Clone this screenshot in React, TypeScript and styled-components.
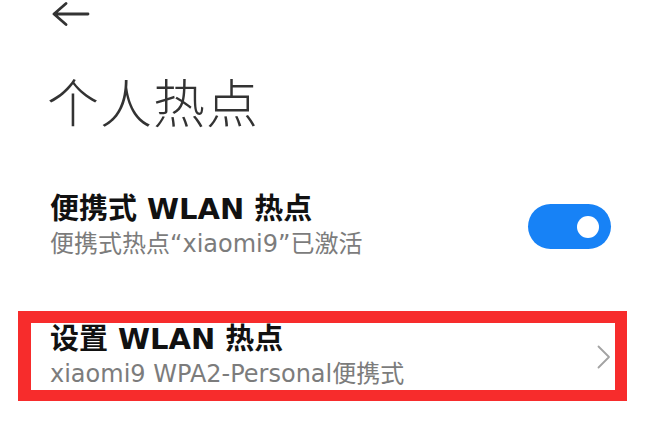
import { FC } from 'react';
import styled, { createGlobalStyle } from 'styled-components';

const GlobalStyle = createGlobalStyle`
  html, body {
    margin: 0;
    padding: 0;
    background: #ffffff;
  }
  body {
    font-family: "DejaVu Sans", "Noto Sans CJK SC", sans-serif;
    -webkit-font-smoothing: antialiased;
  }
`;

const Screen = styled.div`
  width: 660px;
  height: 425px;
  overflow: hidden;
  background: #fff;
  display: flex;
  flex-direction: column;
`;

const TopBar = styled.div`
  height: 26px;
  display: flex;
  align-items: flex-start;
  padding: 2px 0 0 52px;
`;

const BackButton = styled.button`
  border: 0;
  padding: 0;
  background: none;
  width: 38px;
  height: 24px;
  display: flex;
  color: #333;
`;

const PageTitle = styled.h1`
  margin: 45px 0 0 47px;
  font-family: "Noto Sans CJK SC", sans-serif;
  font-size: 52px;
  line-height: 56px;
  font-weight: 300;
  color: #333;
  letter-spacing: 1px;
`;

const List = styled.div`
  margin-top: 64px;
  display: flex;
  flex-direction: column;
`;

const Row = styled.div<{ $highlight?: boolean }>`
  display: flex;
  align-items: center;
  justify-content: space-between;
  margin: ${({ $highlight }) => ($highlight ? '51px 33px 0 18px' : '0 49px 0 50px')};
  padding: ${({ $highlight }) => ($highlight ? '0 4px 0 19px' : '0')};
  border: ${({ $highlight }) => ($highlight ? '12px solid #f72c2c' : 'none')};
  border-width: ${({ $highlight }) => ($highlight ? '12px 12px 11px 13px' : '0')};
`;

const RowText = styled.div`
  display: flex;
  flex-direction: column;
  gap: 4px;
`;

const RowTitle = styled.div`
  font-size: 29px;
  line-height: 32px;
  font-weight: 700;
  color: #111;
`;

const RowSub = styled.div`
  font-size: 24px;
  line-height: 31px;
  color: #7c7c7c;
`;

const Switch = styled.div<{ $on: boolean }>`
  width: 83px;
  height: 45px;
  border-radius: 23px;
  background: ${({ $on }) => ($on ? '#1782f6' : '#d9d9d9')};
  display: flex;
  align-items: center;
  justify-content: ${({ $on }) => ($on ? 'flex-end' : 'flex-start')};
  padding: 0 12px;
  box-sizing: border-box;

  &::after {
    content: '';
    width: 22px;
    height: 22px;
    border-radius: 50%;
    background: #fff;
  }
`;

const Chevron = styled.svg`
  width: 14px;
  height: 24px;
  flex: none;
`;

const ArrowLeft: FC = () => (
  <svg width="38" height="24" viewBox="0 0 38 24" fill="none">
    <path
      d="M36 12H2M14 1.5L2 12l12 10.5"
      stroke="currentColor"
      strokeWidth="2.8"
      strokeLinecap="round"
      strokeLinejoin="round"
    />
  </svg>
);

const App: FC = () => (
  <Screen>
    <GlobalStyle />
    <TopBar>
      <BackButton aria-label="返回">
        <ArrowLeft />
      </BackButton>
    </TopBar>
    <PageTitle>个人热点</PageTitle>
    <List>
      <Row>
        <RowText>
          <RowTitle>便携式 WLAN 热点</RowTitle>
          <RowSub>便携式热点“xiaomi9”已激活</RowSub>
        </RowText>
        <Switch $on />
      </Row>
      <Row $highlight>
        <RowText>
          <RowTitle>设置 WLAN 热点</RowTitle>
          <RowSub>xiaomi9 WPA2-Personal便携式</RowSub>
        </RowText>
        <Chevron viewBox="0 0 14 24" fill="none">
          <path d="M1.5 1.5L12 12 1.5 22.5" stroke="#a3a3a3" strokeWidth="1.8" strokeLinecap="round" strokeLinejoin="round" />
        </Chevron>
      </Row>
    </List>
  </Screen>
);

export default App;
